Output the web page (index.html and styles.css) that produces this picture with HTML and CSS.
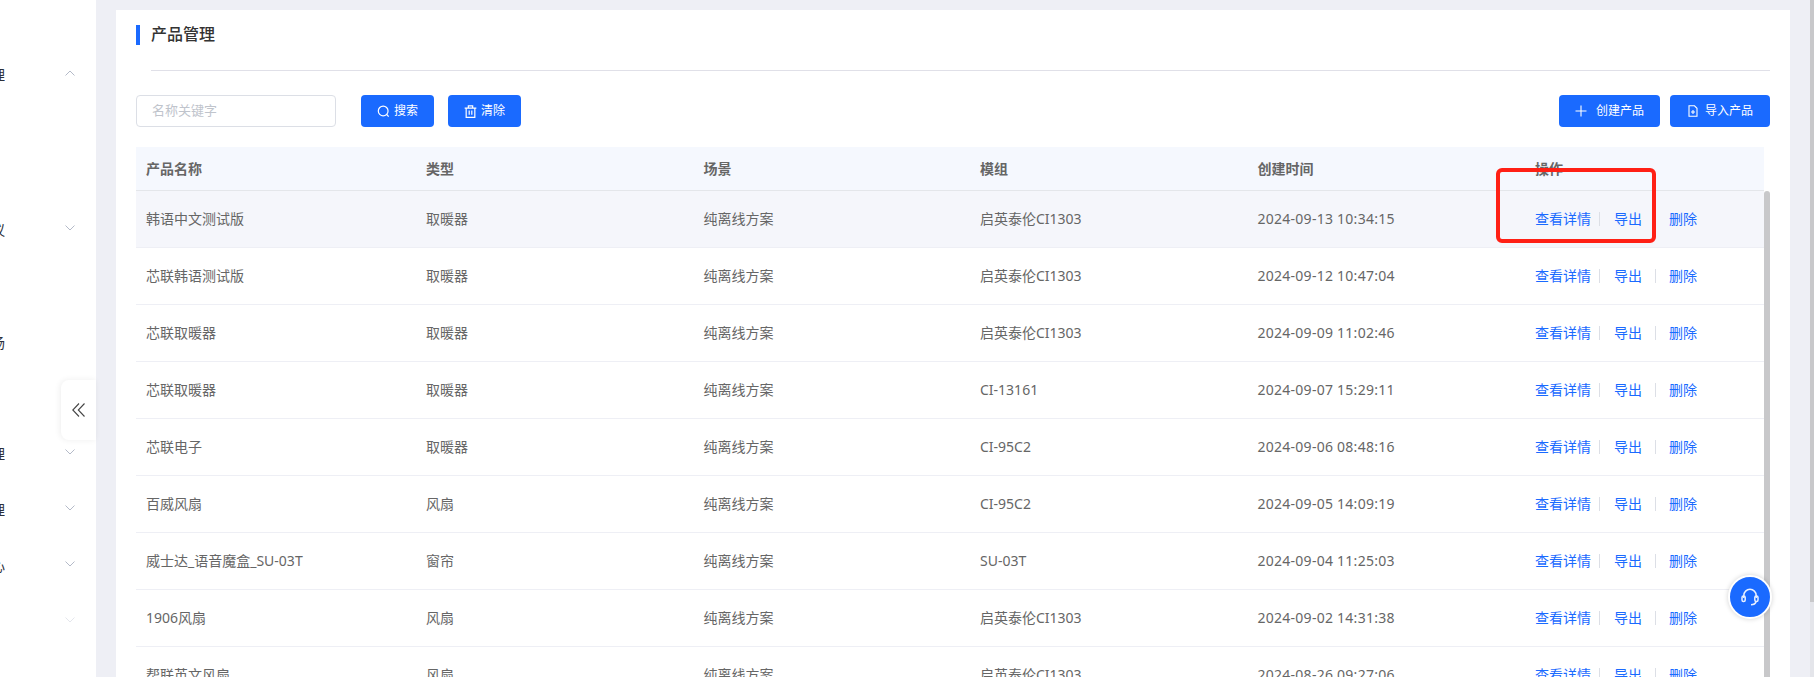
FILE: index.html
```html
<!DOCTYPE html>
<html lang="zh-CN">
<head>
<meta charset="utf-8">
<title>产品管理</title>
<link rel="stylesheet" href="styles.css">
</head>
<body>
<div class="app">
  <aside class="sidebar">
    <div class="menu-item first"><span class="menu-label">产品管理</span><svg class="chev" viewBox="0 0 10 6"><path d="M.5 5.5 5 1l4.500 4.500"/></svg></div>
    <div class="menu-item gap-99"><span class="menu-label">固件协议</span><svg class="chev" viewBox="0 0 10 6"><path d="M.5.500 5 5 9.500.500"/></svg></div>
    <div class="menu-item gap-57"><span class="menu-label">产品市场</span></div>
    <div class="menu-item gap-55"><span class="menu-label">订单管理</span><svg class="chev" viewBox="0 0 10 6"><path d="M.5.500 5 5 9.500.500"/></svg></div>
    <div class="menu-item"><span class="menu-label">账号管理</span><svg class="chev" viewBox="0 0 10 6"><path d="M.5.500 5 5 9.500.500"/></svg></div>
    <div class="menu-item"><span class="menu-label">帮助中心</span><svg class="chev" viewBox="0 0 10 6"><path d="M.5.500 5 5 9.500.500"/></svg></div>
    <div class="menu-item faint"><span class="menu-label"></span><svg class="chev" viewBox="0 0 10 6"><path d="M.5.500 5 5 9.500.500"/></svg></div>
  </aside>
  <main class="main">
    <section class="card">
      <h1 class="title"><span class="title-text">产品管理</span></h1>
      <div class="divider"></div>
      <div class="toolbar">
        <input class="search" type="text" placeholder="名称关键字">
        <button class="btn btn-first"><svg class="ico ico-lg" viewBox="0 0 12 12"><circle cx="5.700" cy="5.500" r="4.500"/><path d="m9 8.800 1.800 1.900"/></svg>搜索</button>
        <button class="btn"><svg class="ico ico-lg" viewBox="0 0 12 12"><path d="M.6 2.800h10.800M4 2.600V.8h4v1.800M2 2.800v8.600h8V2.800M4.800 5v4M7.200 5v4"/></svg>清除</button>
        <button class="btn btn-wide btn-push"><svg class="ico ico-plus" viewBox="0 0 12 12"><path d="M6 .5v11M.5 6h11"/></svg>创建产品</button>
        <button class="btn btn-wide"><svg class="ico" viewBox="0 0 12 12"><path d="M2 .8h5.500L10 3.300v7.900H2zM4 7h4M6 5v4"/></svg>导入产品</button>
      </div>
      <div class="table-wrap">
        <table class="table">
          <colgroup><col class="c1"><col class="c2"><col class="c3"><col class="c4"><col class="c5"><col></colgroup>
          <thead><tr><th>产品名称</th><th>类型</th><th>场景</th><th>模组</th><th>创建时间</th><th>操作</th></tr></thead>
          <tbody>
            <tr class="hover"><td>韩语中文测试版</td><td>取暖器</td><td>纯离线方案</td><td>启英泰伦CI1303</td><td class="date">2024-09-13 10:34:15</td><td><a class="op">查看详情</a><i class="sep sep-a"></i><a class="op">导出</a><i class="sep sep-b"></i><a class="op">删除</a></td></tr>
            <tr><td>芯联韩语测试版</td><td>取暖器</td><td>纯离线方案</td><td>启英泰伦CI1303</td><td class="date">2024-09-12 10:47:04</td><td><a class="op">查看详情</a><i class="sep sep-a"></i><a class="op">导出</a><i class="sep sep-b"></i><a class="op">删除</a></td></tr>
            <tr><td>芯联取暖器</td><td>取暖器</td><td>纯离线方案</td><td>启英泰伦CI1303</td><td class="date">2024-09-09 11:02:46</td><td><a class="op">查看详情</a><i class="sep sep-a"></i><a class="op">导出</a><i class="sep sep-b"></i><a class="op">删除</a></td></tr>
            <tr><td>芯联取暖器</td><td>取暖器</td><td>纯离线方案</td><td>CI-13161</td><td class="date">2024-09-07 15:29:11</td><td><a class="op">查看详情</a><i class="sep sep-a"></i><a class="op">导出</a><i class="sep sep-b"></i><a class="op">删除</a></td></tr>
            <tr><td>芯联电子</td><td>取暖器</td><td>纯离线方案</td><td>CI-95C2</td><td class="date">2024-09-06 08:48:16</td><td><a class="op">查看详情</a><i class="sep sep-a"></i><a class="op">导出</a><i class="sep sep-b"></i><a class="op">删除</a></td></tr>
            <tr><td>百威风扇</td><td>风扇</td><td>纯离线方案</td><td>CI-95C2</td><td class="date">2024-09-05 14:09:19</td><td><a class="op">查看详情</a><i class="sep sep-a"></i><a class="op">导出</a><i class="sep sep-b"></i><a class="op">删除</a></td></tr>
            <tr><td>威士达_语音魔盒_SU-03T</td><td>窗帘</td><td>纯离线方案</td><td>SU-03T</td><td class="date">2024-09-04 11:25:03</td><td><a class="op">查看详情</a><i class="sep sep-a"></i><a class="op">导出</a><i class="sep sep-b"></i><a class="op">删除</a></td></tr>
            <tr><td>1906风扇</td><td>风扇</td><td>纯离线方案</td><td>启英泰伦CI1303</td><td class="date">2024-09-02 14:31:38</td><td><a class="op">查看详情</a><i class="sep sep-a"></i><a class="op">导出</a><i class="sep sep-b"></i><a class="op">删除</a></td></tr>
            <tr><td>帮联英文风扇</td><td>风扇</td><td>纯离线方案</td><td>启英泰伦CI1303</td><td class="date">2024-08-26 09:27:06</td><td><a class="op">查看详情</a><i class="sep sep-a"></i><a class="op">导出</a><i class="sep sep-b"></i><a class="op">删除</a></td></tr>
          </tbody>
        </table>
        <div class="table-scroll"></div>
      </div>
    </section>
  </main>
  <div class="page-scroll"><div class="page-thumb"></div></div>
</div>
<button class="collapse" aria-label="收起"><svg viewBox="0 0 13 14"><path d="M7 .5.800 7 7 13.500M12.500.5 6.300 7l6.200 6.500"/></svg></button>
<div class="annotation"></div>
<button class="help" aria-label="客服"><svg viewBox="0 0 20 20"><path d="M3.800 11V8.500a6.200 6.200 0 0 1 12.400 0V11"/><rect x="2" y="9" width="3.200" height="5.600" rx="1.500"/><rect x="14.800" y="9" width="3.200" height="5.600" rx="1.500"/><path d="M16 14.800c-.5 2-2.500 3-5 3"/></svg></button>
</body>
</html>
```

FILE: styles.css
```css
* { box-sizing: border-box; }
html, body { margin: 0; height: 677px; overflow: hidden; }
body {
  font-family: "Noto Sans", "Noto Sans CJK SC", sans-serif;
  font-size: 14px;
  color: #666;
  background: #eeeff5;
}
.app { display: flex; height: 677px; }

/* sidebar */
.sidebar { width: 96px; flex: none; background: #fff; padding-top: 46px; display: flex; flex-direction: column; }
.menu-item { height: 56px; flex: none; display: flex; align-items: center; }
.gap-99 { margin-top: 99px; }
.gap-57 { margin-top: 57px; }
.gap-55 { margin-top: 55px; }
.menu-label {
  width: 5px; flex: none; overflow: hidden; display: flex; justify-content: flex-end;
  white-space: nowrap; color: #2b2f3a; padding-top: 1px; line-height: 20px;
}
.chev { width: 10px; height: 6px; margin-left: 60px; margin-bottom: 2px; fill: none; stroke: #b4bac8; stroke-width: 1; }
.faint .chev { stroke: #e4e6ec; }

/* main */
.main { flex: 1; min-width: 0; padding: 10px 20px 0; display: flex; }
.card { flex: 1; min-width: 0; background: #fff; padding: 15px 20px 0; display: flex; flex-direction: column; }
.title {
  margin: 0; height: 20px; border-left: 4px solid #1a6aff; padding-left: 11px;
  font-size: 16px; line-height: 18px; font-weight: 500; color: #333; flex: none;
}
.title-text { display: block; }
.divider { height: 1px; background: #e0e0e8; margin: 25px 0 24px 15px; flex: none; }
.toolbar { display: flex; height: 32px; flex: none; }
.search {
  width: 200px; height: 32px; border: 1px solid #dcdfe6; border-radius: 4px; padding: 0 15px 2px;
  font: 13px "Noto Sans", "Noto Sans CJK SC", sans-serif; color: #666; outline: none;
}
.search::placeholder { color: #c0c4cc; opacity: 1; }
.btn {
  width: 73px; height: 32px; border: 0; border-radius: 4px; background: #1a6aff; color: #fff;
  font: 12px "Noto Sans", "Noto Sans CJK SC", sans-serif; display: flex; align-items: center; justify-content: center;
  padding: 0 0 2px; margin-left: 14px;
}
.btn-first { margin-left: 25px; }
.btn-wide { width: 100px; margin-left: 10px; }
.btn-push { margin-left: auto; width: 101px; }
.ico { width: 12px; height: 12px; margin-right: 6px; fill: none; stroke: #fff; stroke-width: 1.100; margin-top: 2px; }
.ico-lg { width: 13px; height: 13px; margin-right: 4px; }
.ico-plus { margin-right: 9px; }

/* table */
.table-wrap { margin-top: 20px; flex: 1; min-height: 0; display: flex; overflow: hidden; }
.table { width: 1628px; flex: none; border-collapse: separate; border-spacing: 0; table-layout: fixed; align-self: flex-start; }
.c1 { width: 280px; }
.c2 { width: 277.500px; }
.c3 { width: 276.500px; }
.c4 { width: 277.500px; }
.c5 { width: 277.500px; }
th {
  height: 43.500px; padding: 0 10px; text-align: left; font-size: 14px; font-weight: 700; color: #666;
  background: #f5f8fe; border-bottom: 1px solid #e4e6ea;
}
td { height: 57px; padding: 0 10px 1px; border-bottom: 1px solid #eeeff5; white-space: nowrap; color: #666; }
.hover td { background: #f5f6fb; }
.date { letter-spacing: .26px; }
.op { color: #1a6aff; }
.sep { display: inline-block; width: 1px; height: 14px; background: #dcdfe6; vertical-align: -2px; }
.sep-a { margin: 0 14px 0 8px; }
.sep-b { margin: 0 13px 0 13px; }
.table-scroll { width: 6px; margin-top: 44px; background: #c8c8ca; border-radius: 3px 3px 0 0; flex: none; }

/* page scrollbar */
.page-scroll { width: 4px; flex: none; background: #e4e5ea; }
.page-thumb { height: 602px; background: #c8c8ca; }

/* overlays */
.collapse {
  position: absolute; left: 61px; top: 380px; width: 35px; height: 60px; padding: 0 0 0 11px; border: 0;
  background: #fff; border-radius: 8px 0 0 8px; box-shadow: -1px 0 6px rgba(0, 0, 0, .07);
  display: flex; align-items: center;
}
.collapse svg { width: 13px; height: 14px; fill: none; stroke: #444; stroke-width: 1.100; }
.annotation {
  position: absolute; left: 1496px; top: 168px; width: 160px; height: 75px;
  border: 4px solid #ff2015; border-radius: 6px;
}
.help {
  position: absolute; left: 1728px; top: 575px; width: 44px; height: 44px; padding: 0;
  border: 2px solid #fff; border-radius: 50%; background: #1a6aff;
  box-shadow: 0 0 5px rgba(0, 0, 0, .18); display: flex; align-items: center; justify-content: center;
}
.help svg { width: 20px; height: 20px; fill: none; stroke: #e8f0ff; stroke-width: 1.500; }
```
